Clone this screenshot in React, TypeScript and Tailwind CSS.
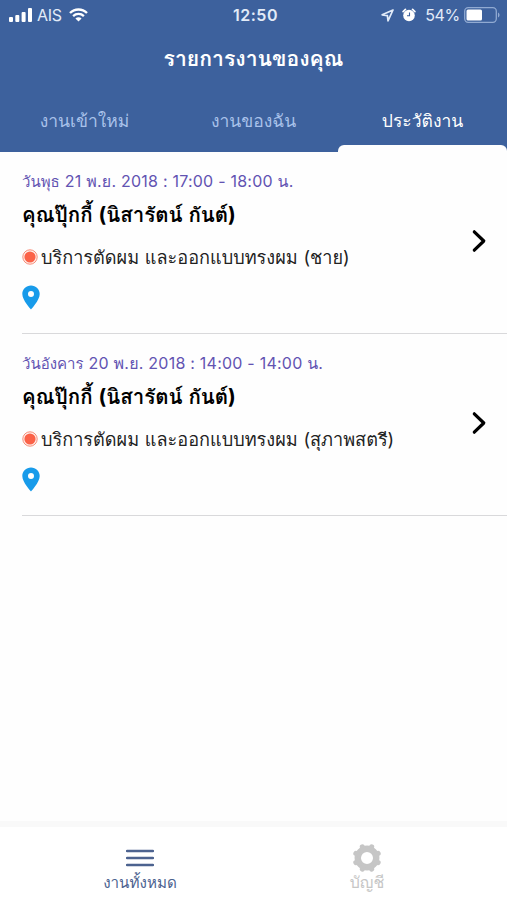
function StatusBar() {
  return (
    <div className="grid h-[30px] grid-cols-3 items-center text-[16px] leading-none text-[#e2ebf8]">
      <div className="flex items-center pl-[9px]">
        <svg className="h-3.5 w-[23px]" viewBox="0 0 23 14" fill="white">
          <rect x="0" y="9" width="4" height="5" rx="1" />
          <rect x="6.3" y="7" width="4" height="7" rx="1" />
          <rect x="12.6" y="4" width="4" height="10" rx="1" />
          <rect x="19" y="0" width="4" height="14" rx="1" />
        </svg>
        <span className="ml-[5px] text-[16px] tracking-[-0.3px]">AIS</span>
        <svg className="ml-[7px] h-3.5 w-[19px]" viewBox="0 0 19 14" fill="none" stroke="white">
          <path d="M1 5C5.8.3 13.2.3 18 5" strokeWidth="2.4" />
          <path d="M4.1 8.1c3-2.9 7.8-2.9 10.8 0" strokeWidth="2.3" />
          <path d="M6.4 10.4c1.8-1.6 4.4-1.6 6.2 0L9.5 13.6z" fill="white" stroke="none" />
        </svg>
      </div>
      <span className="pl-1 text-center font-semibold tracking-[0.5px]">12:50</span>
      <div className="flex items-center justify-end pr-[7px]">
        <svg className="h-[13px] w-[13px]" viewBox="0 0 13 13" fill="none" stroke="#e2ebf8" strokeWidth="1.7" strokeLinejoin="round">
          <path d="M12 1 1.2 5.8l5.2.8.6 5.2z" />
        </svg>
        <svg className="ml-2 h-3.5 w-3.5" viewBox="0 0 14 14">
          <circle cx="7" cy="7.5" r="5.8" fill="white" />
          <path d="M1.1 3.6 3.4 1.4M12.9 3.6 10.6 1.4" stroke="white" strokeWidth="1.7" strokeLinecap="round" />
          <path d="M7.5 4.4v3.4H5" stroke="#3d619d" strokeWidth="1.1" fill="none" />
        </svg>
        <span className="ml-[9px] text-[16px] tracking-[-0.3px]">54%</span>
        <svg className="ml-1 h-4 w-9" viewBox="0 0 36 16">
          <rect x=".7" y=".7" width="31.6" height="14.6" rx="3.5" fill="none" stroke="#91aad2" strokeWidth="1.3" />
          <rect x="2.5" y="2.5" width="15.5" height="11" rx="1.5" fill="white" />
          <path d="M34 5.5c2 .8 2 4.2 0 5z" fill="#91aad2" />
        </svg>
      </div>
    </div>
  );
}

type Job = { day: string; date: string; name: string; service: string };

const jobs: Job[] = [
  { day: "วันพุธ", date: "21 พ.ย. 2018 : 17:00 - 18:00 น.", name: "คุณปุ๊กกี้ (นิสารัตน์ กันต์)", service: "บริการตัดผม และออกแบบทรงผม (ชาย)" },
  { day: "วันอังคาร", date: "20 พ.ย. 2018 : 14:00 - 14:00 น.", name: "คุณปุ๊กกี้ (นิสารัตน์ กันต์)", service: "บริการตัดผม และออกแบบทรงผม (สุภาพสตรี)" },
];

function JobRow({ job }: { job: Job }) {
  return (
    <article className="ml-[22px] flex h-[182px] items-center justify-between border-b border-[#d9d9db] pr-5">
      <div className="flex h-full flex-col whitespace-nowrap pt-[17px]">
        <p className="flex h-6 items-baseline gap-[5px] leading-6 text-[#6253b2]">
          <span className="text-[15px]">{job.day}</span>
          <span className="text-[16px] tracking-[0.23px]">{job.date}</span>
        </p>
        <h2 className="mt-1.5 h-8 text-[20.5px] font-bold leading-8 text-black [word-spacing:1px]">{job.name}</h2>
        <div className="mt-2.5 flex h-8 items-center gap-[3px] text-[18.1px] leading-8 text-[#222] [word-spacing:0.7px]">
          <svg className="h-4 w-4" viewBox="0 0 16 16">
            <circle cx="8" cy="8" r="7.2" fill="#fff0ec" stroke="#f78d79" strokeWidth="1" />
            <circle cx="8" cy="8" r="5.6" fill="#fb6248" />
          </svg>
          <span>{job.service}</span>
        </div>
        <svg className="mt-3 h-[25px] w-[18px]" viewBox="0 0 18 25">
          <path fillRule="evenodd" d="M9 .5C4.1.5.3 4.3.3 9c0 6.2 8.7 15.5 8.7 15.5S17.7 15.2 17.7 9C17.7 4.3 13.9.5 9 .5Zm0 5.6a3 3 0 1 1 0 6 3 3 0 0 1 0-6Z" fill="#189bea" />
        </svg>
      </div>
      <svg className="mb-1 h-6 w-4" viewBox="0 0 16 24" fill="none" stroke="black" strokeWidth="3.2" strokeLinecap="round" strokeLinejoin="round">
        <path d="m3.3 2.8 9.5 9.2-9.5 9.2" />
      </svg>
    </article>
  );
}

export default function App() {
  return (
    <div className="flex h-[900px] w-[507px] flex-col overflow-hidden bg-[#fefefe] font-['Inter','Loma','Liberation_Sans',sans-serif]">
      <header className="flex h-[152px] flex-col bg-[#3d619d]">
        <StatusBar />
        <h1 className="mt-2.5 h-9 text-center text-[21.2px] font-bold leading-9 text-white">รายการงานของคุณ</h1>
        <nav className="mt-auto grid h-[50px] grid-cols-3 text-center text-[17.5px] leading-[38px] text-[#a9c1ea]">
          <span>งานเข้าใหม่</span>
          <span>งานของฉัน</span>
          <div className="flex flex-col text-white">
            <span className="h-[43px]">ประวัติงาน</span>
            <span className="h-[7px] rounded-t-md bg-[#fefefe]" />
          </div>
        </nav>
      </header>
      <main className="flex-1">
        {jobs.map((job) => <JobRow key={job.day} job={job} />)}
      </main>
      <div className="h-1.5 bg-[#f9f9f9]" />
      <footer className="grid h-[73px] grid-cols-[280px_174px_53px] bg-white">
        <div className="flex flex-col items-center pt-[22px] text-[#4c628f]">
          <svg className="h-[18px] w-7" viewBox="0 0 28 18" stroke="currentColor" strokeWidth="2.4" strokeLinecap="round">
            <path d="M1 2h26M1 9h26M1 16h26" />
          </svg>
          <span className="mt-0.5 text-[15.2px] leading-7">งานทั้งหมด</span>
        </div>
        <div className="flex flex-col items-center pt-4 text-[#c6c6c6]">
          <svg className="h-[30px] w-[30px]" viewBox="0 0 30 30" fill="none" stroke="currentColor">
            <g transform="rotate(22.5 15 15)">
              <circle cx="15" cy="15" r="9.2" strokeWidth="6.4" />
              <path d="M15 3v3M15 24v3M3 15h3M24 15h3M6.5 6.5l2 2M21.5 21.5l2 2M6.5 23.5l2-2M21.5 8.5l2-2" strokeWidth="5.2" strokeLinecap="round" />
            </g>
          </svg>
          <span className="-mt-[5px] text-[16px] leading-7">บัญชี</span>
        </div>
      </footer>
    </div>
  );
}
